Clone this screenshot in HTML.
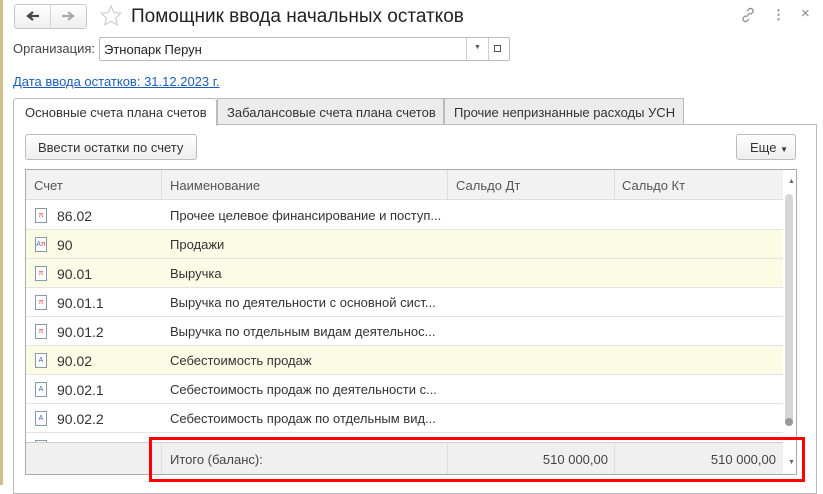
<!DOCTYPE html>
<html><head><meta charset="utf-8"><style>
*{box-sizing:border-box;margin:0;padding:0}
body{width:823px;height:485px;overflow:hidden;background:#fff;font-family:"Liberation Sans",Arial,sans-serif;font-size:13px;color:#333;position:relative}
.a{position:absolute}
.cell{position:absolute;white-space:nowrap;overflow:hidden}
</style></head><body>
<div class="a" style="left:0;top:0;width:3px;height:485px;background:#cfc08a"></div>

<div class="a" style="left:14px;top:4px;width:73px;height:25px;border:1px solid #c8c8c8;border-radius:3px;background:linear-gradient(#fff,#efefef)"></div>
<div class="a" style="left:50px;top:5px;width:1px;height:23px;background:#d6d6d6"></div>
<svg class="a" style="left:25px;top:10px" width="16" height="12" viewBox="0 0 16 12"><path d="M14 6H4M8 2L3 6l5 4" fill="none" stroke="#444" stroke-width="2.2"/></svg>
<svg class="a" style="left:60px;top:10px" width="16" height="12" viewBox="0 0 16 12"><path d="M2 6h10M8 2l5 4-5 4" fill="none" stroke="#aaa" stroke-width="2.2"/></svg>
<svg class="a" style="left:99px;top:4px" width="24" height="24" viewBox="0 0 24 24"><path d="M12 2l2.9 6.6 7.1.6-5.4 4.7 1.6 7-6.2-3.7-6.2 3.7 1.6-7L2 9.2l7.1-.6z" fill="none" stroke="#c8c8c8" stroke-width="1"/></svg>
<div class="a" style="left:131px;top:6px;font-size:19px;color:#222">Помощник ввода начальных остатков</div>
<svg class="a" style="left:740px;top:7px" width="16" height="16" viewBox="0 0 16 16"><path d="M6 10l4-4M7 4l2-2a2.5 2.5 0 013.5 3.5l-2 2M9 12l-2 2a2.5 2.5 0 01-3.5-3.5l2-2" fill="none" stroke="#888" stroke-width="1.2"/></svg>
<div class="a" style="left:777px;top:8px;width:3px;height:14px;background:radial-gradient(circle,#999 1px,transparent 1.3px) 0 0/3px 4.5px"></div>
<div class="a" style="left:801px;top:5px;font-size:15px;color:#888">×</div>

<div class="a" style="left:13px;top:41px;color:#444">Организация:</div>
<div class="a" style="left:99px;top:37px;width:411px;height:24px;border:1px solid #bbb;border-radius:2px"></div>
<div class="a" style="left:104px;top:42px;color:#222">Этнопарк Перун</div>
<div class="a" style="left:466px;top:38px;width:1px;height:22px;background:#ccc"></div>
<div class="a" style="left:488px;top:38px;width:1px;height:22px;background:#ccc"></div>
<div class="a" style="left:474px;top:44px;font-size:7px;color:#555">▼</div>
<div class="a" style="left:494px;top:45px;width:7px;height:7px;border:1px solid #555"></div>

<div class="a" style="left:13px;top:74px;color:#1a5fb4;text-decoration:underline">Дата ввода остатков: 31.12.2023 г.</div>

<div class="a" style="left:13px;top:124px;width:804px;height:370px;border:1px solid #bbb"></div>
<div class="a" style="left:217px;top:98px;width:227px;height:27px;border:1px solid #bbb;background:#ececec"></div>
<div class="a" style="left:444px;top:98px;width:240px;height:27px;border:1px solid #bbb;background:#ececec"></div>
<div class="a" style="left:13px;top:98px;width:204px;height:28px;border:1px solid #bbb;border-bottom:none;background:#fff;border-radius:3px 3px 0 0"></div>
<div class="a" style="left:25px;top:105px">Основные счета плана счетов</div>
<div class="a" style="left:227px;top:105px">Забалансовые счета плана счетов</div>
<div class="a" style="left:454px;top:105px">Прочие непризнанные расходы УСН</div>

<div class="a" style="left:25px;top:134px;width:172px;height:26px;border:1px solid #bbb;border-radius:3px;background:linear-gradient(#fff,#eee)"></div>
<div class="a" style="left:38px;top:140px">Ввести остатки по счету</div>
<div class="a" style="left:736px;top:134px;width:60px;height:26px;border:1px solid #bbb;border-radius:3px;background:linear-gradient(#fff,#eee)"></div>
<div class="a" style="left:750px;top:140px">Еще <span style="font-size:8px">▼</span></div>

<div class="a" style="left:25px;top:169px;width:772px;height:306px;border:1px solid #aaa;overflow:hidden">
<div class="a" style="left:0;top:0;width:757px;height:30px;background:#f2f2f2;border-bottom:1px solid #ddd"></div>
<div class="cell" style="left:8px;top:8px;color:#555">Счет</div>
<div class="cell" style="left:144px;top:8px;color:#555">Наименование</div>
<div class="cell" style="left:430px;top:8px;color:#555">Сальдо Дт</div>
<div class="cell" style="left:596px;top:8px;color:#555">Сальдо Кт</div>
<div class="a" style="left:135px;top:0;width:1px;height:30px;background:#ddd"></div>
<div class="a" style="left:421px;top:0;width:1px;height:30px;background:#ddd"></div>
<div class="a" style="left:588px;top:0;width:1px;height:30px;background:#ddd"></div>
<div id="rows"></div>
<div class="a" style="left:0;top:272px;width:757px;height:32px;background:#f0f0f0;border-top:1px solid #ccc"></div>
<div class="a" style="left:135px;top:272px;width:1px;height:32px;background:#ddd"></div>
<div class="a" style="left:421px;top:272px;width:1px;height:32px;background:#ddd"></div>
<div class="a" style="left:588px;top:272px;width:1px;height:32px;background:#ddd"></div>
<div class="cell" style="left:144px;top:282px;color:#444">Итого (баланс):</div>
<div class="cell" style="left:421px;top:282px;width:161px;text-align:right;color:#444">510 000,00</div>
<div class="cell" style="left:588px;top:282px;width:162px;text-align:right;color:#444">510 000,00</div>
<div class="a" style="left:757px;top:0;width:14px;height:304px;background:#fff"></div>
<div class="a" style="left:762px;top:8px;font-size:7px;color:#666">▲</div>
<div class="a" style="left:759px;top:24px;width:8px;height:232px;background:#d6d6d6;border-radius:4px"></div>
<div class="a" style="left:759px;top:248px;width:8px;height:8px;background:#999;border-radius:4px"></div>
<div class="a" style="left:762px;top:289px;font-size:7px;color:#666">▼</div>
</div>
<div class="a" style="left:149px;top:437px;width:656px;height:45px;border:3px solid #f00"></div>
<script>
var d=[["86.02","Прочее целевое финансирование и поступ...",0,"п"],["90","Продажи",1,"ап"],["90.01","Выручка",1,"п"],["90.01.1","Выручка по деятельности с основной сист...",0,"п"],["90.01.2","Выручка по отдельным видам деятельнос...",0,"п"],["90.02","Себестоимость продаж",1,"а"],["90.02.1","Себестоимость продаж по деятельности с...",0,"а"],["90.02.2","Себестоимость продаж по отдельным вид...",0,"а"],["90.03","Налог на добавленную...",0,"п"]];
var h="";d.forEach(function(r,i){var t=31+i*29;
h+='<div class="a" style="left:0;top:'+t+'px;width:757px;height:29px;border-bottom:1px solid #e4e4e4;background:'+(r[2]?'#fcfce6':'#fff')+'"></div>';
var ic=r[3]=="п"?'<span style="color:#e33">π</span>':r[3]=="а"?'<span style="color:#36c">A</span>':'<span style="color:#36c">A</span><span style="color:#e33">π</span>';
h+='<div class="a" style="left:9px;top:'+(t+7)+'px;width:12px;height:15px;border:1px solid #8899aa;font-size:7px;line-height:13px;text-align:center;background:#fff">'+ic+'</div>';
h+='<div class="cell" style="left:31px;top:'+(t+7)+'px;font-size:14px">'+r[0]+'</div>';
h+='<div class="cell" style="left:144px;top:'+(t+7)+'px">'+r[1]+'</div>';});
document.getElementById("rows").innerHTML=h;
</script>
</body></html>
